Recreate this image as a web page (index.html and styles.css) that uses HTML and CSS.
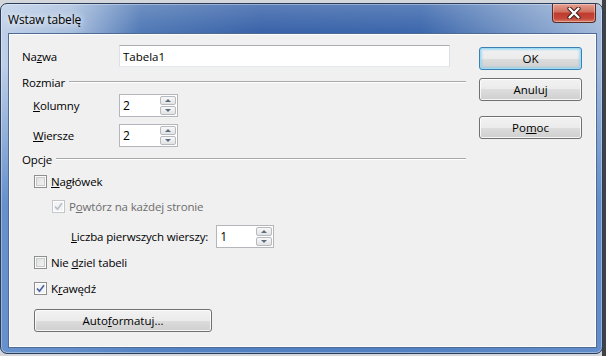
FILE: index.html
```html
<!DOCTYPE html>
<html>
<head>
  <title>Wstaw tabelę</title>
  <meta charset="UTF-8">
  <link rel="stylesheet" href="styles.css">
</head>
<body>
  <div class="window">
    <div class="titlebar">
      <span class="title">Wstaw tabelę</span>
      <button class="close-btn" title="Zamknij">
        <svg width="14" height="12" viewBox="0 0 14 12">
          <path d="M2.5 1.5 L11.5 10.5 M11.5 1.5 L2.5 10.5" stroke="#3a1a16" stroke-width="4.2" stroke-linecap="round"/>
          <path d="M2.5 1.5 L11.5 10.5 M11.5 1.5 L2.5 10.5" stroke="#fff" stroke-width="2.4" stroke-linecap="round"/>
        </svg>
      </button>
    </div>

    <div class="client">
      <div class="form">
        <div class="row row-name">
          <span class="label name-label">Na<u>z</u>wa</span>
          <input class="text-input" type="text" value="Tabela1">
        </div>

        <!-- Rozmiar -->
        <div class="section s-size">
          <span>Rozmiar</span>
          <span class="rule"></span>
        </div>
        <div class="row row-spin r-cols">
          <span class="label spin-label"><u>K</u>olumny</span>
          <div class="spin"><span class="spin-value">2</span><span class="spin-btns"><i class="up"></i><i class="down"></i></span></div>
        </div>
        <div class="row row-spin r-rows">
          <span class="label spin-label"><u>W</u>iersze</span>
          <div class="spin"><span class="spin-value">2</span><span class="spin-btns"><i class="up"></i><i class="down"></i></span></div>
        </div>

        <!-- Opcje -->
        <div class="section s-opts">
          <span>Opcje</span>
          <span class="rule"></span>
        </div>
        <div class="row check-row r-head">
          <span class="check"></span>
          <span><u>N</u>agłówek</span>
        </div>
        <div class="row check-row r-repeat disabled">
          <span class="check checked">
            <svg width="11" height="11" viewBox="0 0 11 11"><path d="M2 5.5 L4.5 8.2 L9 2.2" fill="none" stroke="#b7bfcc" stroke-width="1.7"/></svg>
          </span>
          <span>P<u>o</u>wtórz na każdej stronie</span>
        </div>
        <div class="row r-count">
          <span class="label count-label"><u>L</u>iczba pierwszych wierszy:</span>
          <div class="spin"><span class="spin-value">1</span><span class="spin-btns"><i class="up"></i><i class="down"></i></span></div>
        </div>
        <div class="row check-row r-split">
          <span class="check"></span>
          <span>Nie <u>d</u>ziel tabeli</span>
        </div>
        <div class="row check-row r-border">
          <span class="check checked">
            <svg width="11" height="11" viewBox="0 0 11 11"><path d="M2 5.5 L4.5 8.2 L9 2.2" fill="none" stroke="#4a64a8" stroke-width="1.7"/></svg>
          </span>
          <span>K<u>r</u>awędź</span>
        </div>
        <button class="btn autoformat-btn">Auto<u>f</u>ormatuj...</button>
      </div>

      <div class="actions">
        <button class="btn default-btn">OK</button>
        <button class="btn cancel-btn">Anuluj</button>
        <button class="btn help-btn">Po<u>m</u>oc</button>
      </div>
    </div>
  </div>
</body>
</html>
```

FILE: styles.css
```css
html, body {
  margin: 0;
  height: 356px;
  overflow: hidden;
}
body {
  padding-top: 3px;
  box-sizing: border-box;
  background: linear-gradient(to right, #d3d6da 602px, #3f4246 602px);
  font-family: "Open Sans", "Noto Sans", sans-serif;
  font-size: 11.5px;
  letter-spacing: -0.15px;
  color: #000;
}
u {
  text-decoration: underline;
  text-underline-offset: 1px;
}

/* window frame */
.window {
  width: 603px;
  height: 351px;
  box-sizing: border-box;
  border: 1px solid #2b3d58;
  border-radius: 7px;
  display: flex;
  flex-direction: column;
  background:
    linear-gradient(to bottom, rgba(255,255,255,0.18) 0, rgba(255,255,255,0) 30px, rgba(86,134,200,0) 60px, rgba(86,134,200,0.85) 200px),
    linear-gradient(to right, #bfd0e8 0, #a9bfde 70px, #4f78b5 140px, #3862a8 260px, #3a66ab 420px, #6c8ec1 500px, #a4bbdb 603px);
  box-shadow: inset 0 0 0 1px rgba(255,255,255,0.35);
}
.titlebar {
  height: 29px;
  display: flex;
  justify-content: space-between;
  align-items: flex-start;
  padding: 0 6px 0 7px;
}
.title {
  align-self: center;
  line-height: 16px;
  margin-top: 2px;
  font-size: 12px;
  text-shadow: 0 0 6px rgba(255,255,255,0.9), 0 0 10px rgba(255,255,255,0.7);
}
.close-btn {
  width: 44px;
  height: 19px;
  padding: 0;
  border: 1px solid #5c2a25;
  border-top: none;
  border-radius: 0 0 4px 4px;
  background: linear-gradient(to bottom, #e6a08f 0, #d0705f 45%, #bf3b2e 50%, #c4473a 80%, #dc7d63 100%);
  box-shadow: inset 0 0 0 1px rgba(255,255,255,0.35);
  display: flex;
  align-items: center;
  justify-content: center;
}

/* client area */
.client {
  flex: 1;
  margin: 0 5px 5px 7px;
  background: #f0f0f0;
  border: 1px solid #4f6b94;
  box-shadow: inset 0 0 0 1px #fcfdfe;
  display: flex;
  gap: 13px;
  padding: 11px 14px 0 13px;
}
.form {
  width: 444px;
  display: flex;
  flex-direction: column;
}
.actions {
  width: 103px;
  display: flex;
  flex-direction: column;
}
.row {
  display: flex;
  align-items: center;
}
.label {
  white-space: nowrap;
}

.row-name { height: 22px; }
.name-label { width: 97px; }
.text-input {
  width: 331px;
  height: 22px;
  box-sizing: border-box;
  margin: 0;
  border: 1px solid #abadb3;
  border-left-color: #dbdfe6;
  border-right-color: #dbdfe6;
  border-bottom-color: #e3e9ef;
  background: #fff;
  font: inherit;
  padding: 0 3px;
}

.section {
  height: 16px;
  display: flex;
  align-items: center;
  gap: 4px;
}
.rule {
  flex: 1;
  border-top: 1px solid #a9a9a9;
  border-bottom: 1px solid #fff;
  margin-top: -1px;
}
.s-size { margin-top: 7px; }
.s-opts { margin-top: 4px; }

.row-spin {
  height: 23px;
  padding-left: 11px;
}
.r-cols { margin-top: 4px; }
.r-rows { margin-top: 7px; }
.spin-label { width: 86px; }

.spin {
  width: 59px;
  height: 23px;
  box-sizing: border-box;
  border: 1px solid #b4b6bb;
  background: #fff;
  display: flex;
  align-items: center;
  justify-content: space-between;
  padding: 0 1px 0 3px;
  font-size: 12px;
}
.spin-btns {
  width: 16px;
  height: 19px;
  display: flex;
  flex-direction: column;
  gap: 1px;
}
.spin-btns i {
  flex: 1;
  box-sizing: border-box;
  border: 1px solid #b6b9bf;
  border-radius: 2px;
  background: linear-gradient(to bottom, #f8f8f8, #e3e3e3);
  display: flex;
  align-items: center;
  justify-content: center;
}
.spin-btns i::before {
  content: "";
  border-left: 3px solid transparent;
  border-right: 3px solid transparent;
}
.spin-btns .up::before { border-bottom: 3px solid #5a6a80; }
.spin-btns .down::before { border-top: 3px solid #5a6a80; }

.check-row {
  height: 18px;
  padding-left: 12px;
  gap: 4px;
}
.r-head { margin-top: 5px; }
.r-repeat { margin-top: 7px; padding-left: 30px; }
.r-split { margin-top: 5px; }
.r-border { margin-top: 8px; }
.disabled { color: #6d6d6d; }

.check {
  width: 13px;
  height: 13px;
  box-sizing: border-box;
  border: 1px solid #8e8f8f;
  background: linear-gradient(135deg, #dcdcdc, #f7f7f7);
  box-shadow: inset 0 0 0 1px #fbfbfb, inset 0 0 0 2px #c9cacc;
  display: flex;
  align-items: center;
  justify-content: center;
}
.check.checked {
  background: #f4f4f4;
  box-shadow: inset 0 0 0 1px #fff;
}
.disabled .check {
  border-color: #c4c6c9;
}

.r-count {
  height: 23px;
  margin-top: 10px;
  padding-left: 49px;
}
.count-label { margin-right: 8px; }
.r-count .spin { width: 58px; }

/* buttons */
.btn {
  height: 23px;
  box-sizing: border-box;
  margin: 0;
  padding: 0;
  border: 1px solid #707070;
  border-radius: 3px;
  background: linear-gradient(to bottom, #f2f2f2 0, #ebebeb 50%, #dddddd 50%, #cfcfcf 100%);
  box-shadow: inset 0 0 0 1px rgba(255,255,255,0.8);
  font: inherit;
  color: #000;
  cursor: pointer;
}
.autoformat-btn {
  width: 178px;
  margin: 12px 0 0 12px;
}
.default-btn {
  margin-top: 2px;
  border-color: #3c7fb1;
  box-shadow: inset 0 0 0 1px #9bdcf7, inset 0 0 2px 2px rgba(120,200,240,0.5);
}
.cancel-btn { margin-top: 8px; }
.help-btn { margin-top: 15px; }
```
